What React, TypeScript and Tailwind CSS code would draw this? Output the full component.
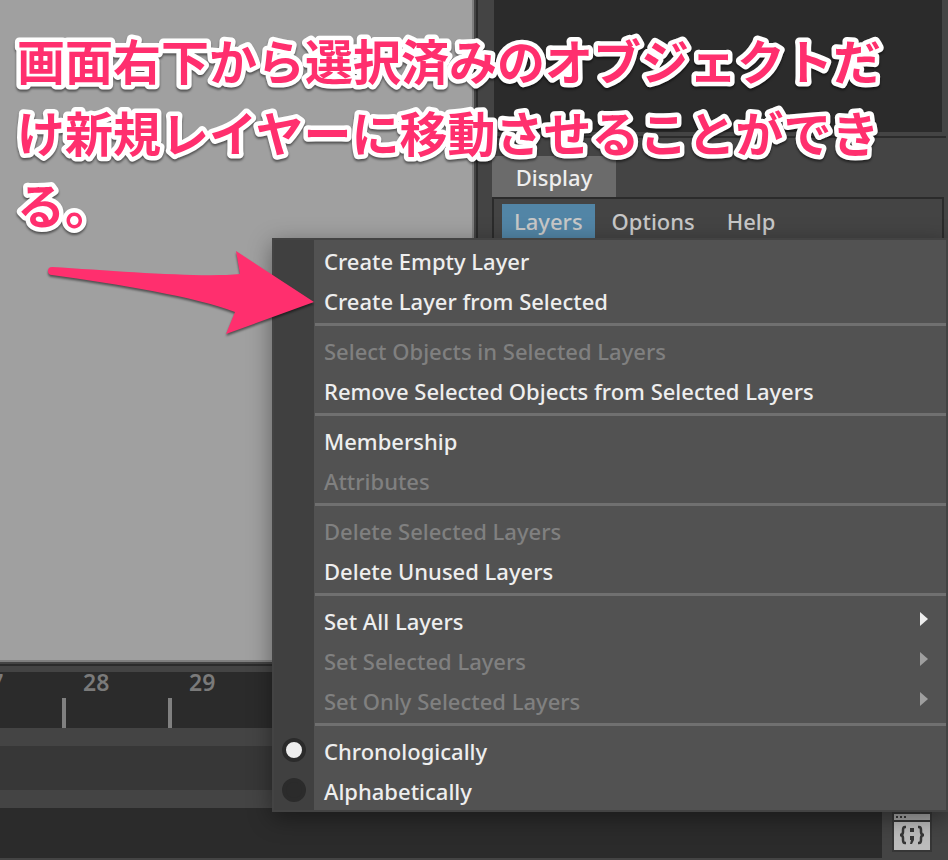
import type { ReactNode } from 'react'

type Entry = { label: string; disabled?: boolean; submenu?: boolean }

const groups: Entry[][] = [
  [{ label: 'Create Empty Layer' }, { label: 'Create Layer from Selected' }],
  [
    { label: 'Select Objects in Selected Layers', disabled: true },
    { label: 'Remove Selected Objects from Selected Layers' },
  ],
  [{ label: 'Membership' }, { label: 'Attributes', disabled: true }],
  [{ label: 'Delete Selected Layers', disabled: true }, { label: 'Delete Unused Layers' }],
  [
    { label: 'Set All Layers', submenu: true },
    { label: 'Set Selected Layers', disabled: true, submenu: true },
    { label: 'Set Only Selected Layers', disabled: true, submenu: true },
  ],
]

function MenuItem({ label, disabled, submenu }: Entry) {
  return (
    <button
      type="button"
      disabled={disabled}
      className="flex h-10 w-full items-center justify-between pt-0.5 pr-[18px] pl-[50px] text-left text-[#eeeeee] disabled:text-[#808080]"
    >
      {label}
      {submenu && (
        <svg
          viewBox="0 0 8 14"
          className={disabled ? 'mb-1 h-3.5 w-2 fill-[#9f9f9f]' : 'mb-1 h-3.5 w-2 fill-[#eeeeee]'}
          aria-hidden="true"
        >
          <path d="M0 0L8 7L0 14Z" />
        </svg>
      )}
    </button>
  )
}

function Separator() {
  return <div className="mt-[3px] mb-1 ml-[41px] h-[3px] bg-[#707070]" />
}

function SortOption({ label, checked }: { label: string; checked?: boolean }) {
  return (
    <label className="flex h-10 items-center gap-[18px] pl-2 text-[#eeeeee]">
      <input
        type="radio"
        name="sort"
        defaultChecked={checked}
        className="size-6 appearance-none rounded-full border-4 border-[#2b2b2b] bg-[#2b2b2b] checked:bg-[#eeeeee]"
      />
      <span className="pt-0.5">{label}</span>
    </label>
  )
}

function LayersMenu() {
  return (
    <div className="absolute top-[238px] right-0 left-[272px] border-2 border-[#434343] bg-[linear-gradient(to_right,#404040_40px,#525252_40px)] shadow-[0_6px_22px_rgba(0,0,0,0.4)]">
      {groups.map((group) => (
        <div key={group[0].label}>
          {group.map((entry) => (
            <MenuItem key={entry.label} {...entry} />
          ))}
          <Separator />
        </div>
      ))}
      <SortOption label="Chronologically" checked />
      <SortOption label="Alphabetically" />
    </div>
  )
}

function MenuTitle({ children, open }: { children: ReactNode; open?: boolean }) {
  return (
    <button
      type="button"
      className={open ? 'h-9 bg-[#5285a6] px-3 pb-0.5 text-[#c8c8c8]' : 'h-9 px-2 pb-0.5 text-[#c8c8c8]'}
    >
      {children}
    </button>
  )
}

function SidePanel() {
  return (
    <aside className="flex min-w-0 flex-1 flex-col border-l-2 border-[#2b2b2b] pr-1 pl-3.5">
      <div className="mr-0.5 ml-0.5 h-[132px] bg-[#2b2b2b]" />
      <div className="mt-1 -mr-0.5 h-0.5 bg-[#2b2b2b]" />
      <div className="mt-[18px] flex">
        <button type="button" className="h-[42px] w-[124px] bg-[#6b6b6b] text-[#eeeeee]">
          Display
        </button>
      </div>
      <div className="-mt-px flex flex-1 items-start gap-[9px] border-2 border-[#2b2b2b] px-2 pt-[5px]">
        <MenuTitle open>Layers</MenuTitle>
        <div className="flex gap-4">
          <MenuTitle>Options</MenuTitle>
          <MenuTitle>Help</MenuTitle>
        </div>
      </div>
    </aside>
  )
}

function Frame({ label }: { label: string }) {
  return (
    <div className="flex w-[106px] flex-col justify-between">
      <span className="pl-[21px] text-[23px] leading-5 font-semibold text-[#7a7a7a]">{label}</span>
      <span className="h-[30px] w-1 bg-[#808080]" />
    </div>
  )
}

function ScriptEditorIcon() {
  return (
    <svg viewBox="0 0 40 42" className="h-[42px] w-10" aria-hidden="true">
      <rect width="40" height="40" fill="#363636" />
      <rect x="2" y="2" width="36" height="6" fill="#a4a4a4" />
      <path d="M4 4h2v2H4zM8 4h2v2H8zM12 4h2v2h-2z" fill="#363636" />
      <rect x="2" y="10" width="36" height="28" fill="#bcbcbc" />
      <g fill="none" stroke="#363636" strokeWidth="2.5">
        <path d="M14 15h-1q-2 0-2 3v2q0 3-3 3q3 0 3 3v2q0 3 2 3h1" />
        <path d="M26 15h1q2 0 2 3v2q0 3 3 3q-3 0-3 3v2q0 3-2 3h-1" />
      </g>
      <path d="M18 16h4v4h-4zM18 24h4v4l-2 4h-2l1-4h-1z" fill="#363636" />
    </svg>
  )
}

const annotationLines = [
  { text: '画面右下から選択済みのオブジェクトだ', y: 80 },
  { text: 'け新規レイヤーに移動させることができ', y: 152 },
  { text: 'る。', y: 224 },
]

function Annotation() {
  return (
    <svg
      viewBox="0 0 900 350"
      className="pointer-events-none absolute top-0 left-0 h-[350px] w-[900px] drop-shadow-[0_2px_1px_rgba(0,0,0,0.5)]"
    >
      <g
        className="font-['Noto_Sans_CJK_JP',sans-serif] text-[48px] font-bold [paint-order:stroke]"
        fill="#ff2f6e"
        stroke="#ffffff"
        strokeWidth="9"
        strokeLinejoin="round"
      >
        {annotationLines.map((line) => (
          <text key={line.y} x="17" y={line.y}>
            {line.text}
          </text>
        ))}
      </g>
      <path
        d="M52 267C117 271 202 278 240 274L236 251L314 302L226 334L235 312C197 297 117 284 52 275A4 4 0 0 1 52 267Z"
        fill="#ff2f6e"
      />
    </svg>
  )
}

export default function App() {
  return (
    <div className="relative flex min-h-screen flex-col overflow-hidden bg-[#444444] font-['Noto_Sans','Open_Sans',sans-serif] text-[22px] leading-8 font-medium">
      <main className="flex flex-1">
        <div className="mr-0.5 w-1/2 border-r-2 border-b-2 border-[#7f7f7f] bg-[#a0a0a0]" />
        <SidePanel />
      </main>
      <div className="mt-0.5 h-0.5 bg-[#2b2b2b]" />
      <div className="mt-1.5 flex h-14 bg-[#2b2b2b]">
        <div className="-ml-11 flex">
          <Frame label="27" />
          <Frame label="28" />
          <Frame label="29" />
        </div>
      </div>
      <div className="mt-[18px] h-11 bg-[#373737]" />
      <footer className="mt-[18px] mb-0.5 flex h-[50px]">
        <div className="flex-1 bg-[#2b2b2b]" />
        <button type="button" aria-label="Script Editor" className="flex w-[66px] items-center pl-2.5">
          <ScriptEditorIcon />
        </button>
      </footer>
      <LayersMenu />
      <Annotation />
    </div>
  )
}
